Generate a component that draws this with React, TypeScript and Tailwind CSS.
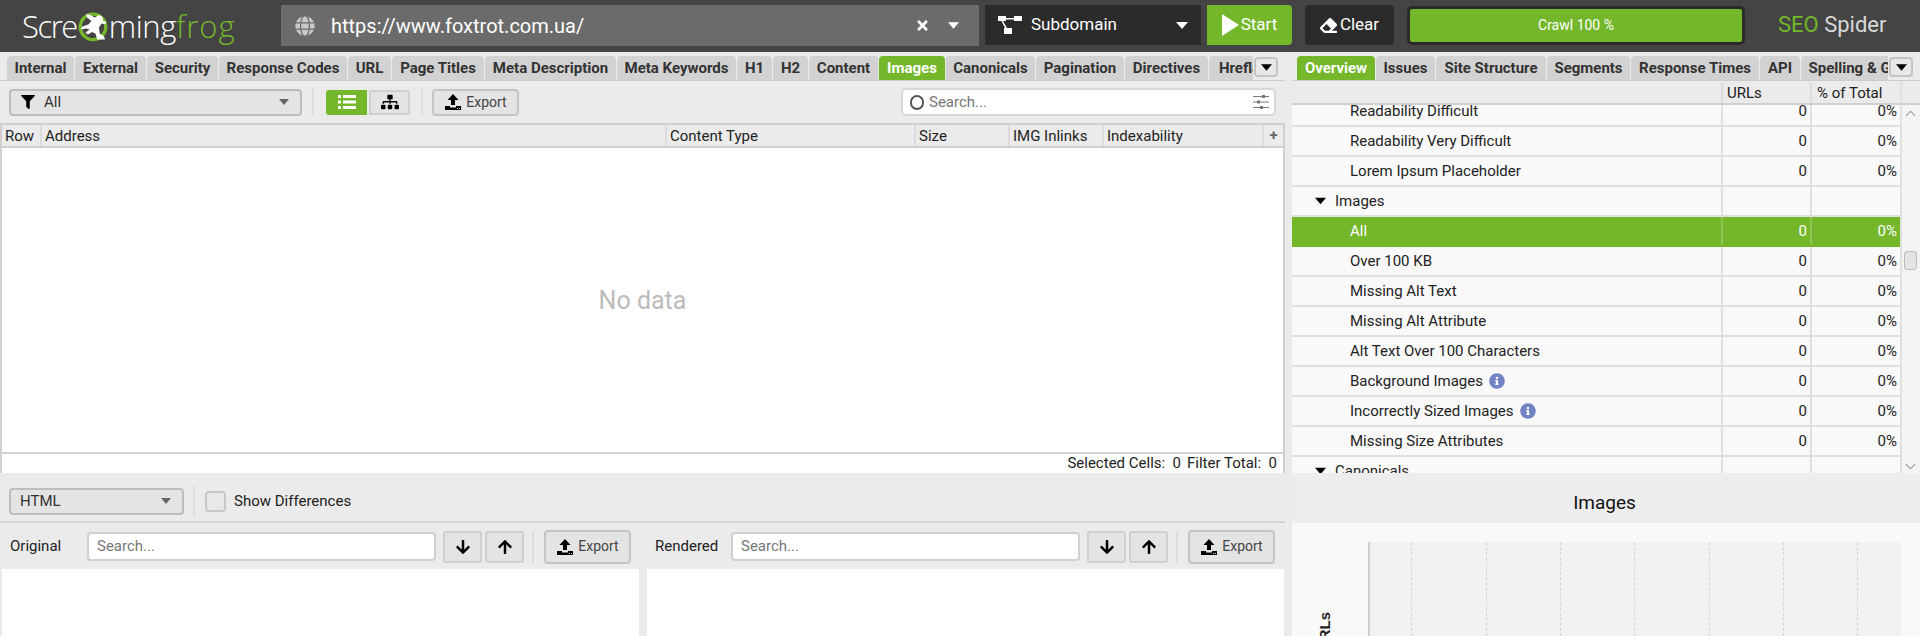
import { FaEraser, FaFilter, FaGlobe, FaInfoCircle, FaSitemap, FaTimes, FaArrowDown, FaArrowUp } from 'react-icons/fa';

const GREEN = 'bg-[#74b72b]';

const leftTabs = [
  { label: 'Internal', w: 'w-[67px]' },
  { label: 'External', w: 'w-[71px]' },
  { label: 'Security', w: 'w-[71px]' },
  { label: 'Response Codes', w: 'w-[128px]' },
  { label: 'URL', w: 'w-[43px]' },
  { label: 'Page Titles', w: 'w-[92px]' },
  { label: 'Meta Description', w: 'w-[131px]' },
  { label: 'Meta Keywords', w: 'w-[119px]' },
  { label: 'H1', w: 'w-[35px]' },
  { label: 'H2', w: 'w-[35px]' },
  { label: 'Content', w: 'w-[69px]' },
  { label: 'Images', w: 'w-[66px]', active: true },
  { label: 'Canonicals', w: 'w-[89px]' },
  { label: 'Pagination', w: 'w-[88px]' },
  { label: 'Directives', w: 'w-[83px]' },
  { label: 'Hreflang', w: 'w-[78px]' },
];

const rightTabs = [
  { label: 'Overview', w: 'w-[78px]', active: true },
  { label: 'Issues', w: 'w-[59px]' },
  { label: 'Site Structure', w: 'w-[110px]' },
  { label: 'Segments', w: 'w-[83px]' },
  { label: 'Response Times', w: 'w-[128px]' },
  { label: 'API', w: 'w-[40px]' },
  { label: 'Spelling & Grammar', w: 'w-[150px]' },
];

const columns = [
  { label: 'Row', w: 'w-[40px]' },
  { label: 'Address', w: 'w-[625px]' },
  { label: 'Content Type', w: 'w-[249px]' },
  { label: 'Size', w: 'w-[94px]' },
  { label: 'IMG Inlinks', w: 'w-[94px]' },
  { label: 'Indexability', w: 'w-[160px]' },
];

const overviewRows = [
  { label: 'Readability Difficult', values: true },
  { label: 'Readability Very Difficult', values: true },
  { label: 'Lorem Ipsum Placeholder', values: true },
  { label: 'Images', group: true },
  { label: 'All', values: true, selected: true },
  { label: 'Over 100 KB', values: true },
  { label: 'Missing Alt Text', values: true },
  { label: 'Missing Alt Attribute', values: true },
  { label: 'Alt Text Over 100 Characters', values: true },
  { label: 'Background Images', values: true, info: true },
  { label: 'Incorrectly Sized Images', values: true, info: true },
  { label: 'Missing Size Attributes', values: true },
  { label: 'Canonicals', group: true },
];

function Caret({ className }: { className: string }) {
  return (
    <svg viewBox="0 0 12 7" className={className} fill="currentColor">
      <path d="M0 0h12L6 7z" />
    </svg>
  );
}

function ExportIcon() {
  return (
    <svg viewBox="0 0 18 18" className="h-[18px] w-[18px] text-black" fill="currentColor">
      <path d="M9 1l5.500 6H11v5H7V7H3.500z" />
      <path d="M1 13h5v1.500h6V13h5v4H1z" />
      <path d="M13 15h1v1h-1zM15 15h1v1h-1z" fill="#ddd" />
    </svg>
  );
}

function ExportButton({ className }: { className: string }) {
  return (
    <button className={`flex items-center justify-center gap-[4px] rounded-[4px] border-2 border-[#c4c4c4] bg-[#e4e4e4] text-[14px] text-[#444] ${className}`}>
      <ExportIcon />
      Export
    </button>
  );
}

function Separator({ className }: { className: string }) {
  return <div className={`w-[2px] bg-[#dcdcdc] ${className}`} />;
}

function Tab({ label, w, active }: { label: string; w: string; active?: boolean }) {
  return (
    <div
      className={`flex h-[24px] shrink-0 items-center justify-center overflow-hidden rounded-t-[4px] pt-[1px] text-[15px] font-bold whitespace-nowrap ${w} ${
        active ? `${GREEN} text-white` : 'bg-[#d2d2d2] text-[#333]'
      }`}
    >
      {label}
    </div>
  );
}

function MoreTabs({ className }: { className: string }) {
  return (
    <button className={`flex h-[20px] w-[24px] shrink-0 items-center justify-center rounded-[4px] border-2 border-[#c4c4c4] bg-[#e8e8e8] ${className}`}>
      <Caret className="h-[7px] w-[11px] text-black" />
    </button>
  );
}

function SearchField({ className }: { className: string }) {
  return (
    <div className={`flex h-[29px] items-center rounded-[4px] border-2 border-[#d0d0d0] bg-white pl-[8px] text-[15px] text-[#777] ${className}`}>
      Search...
    </div>
  );
}

function ArrowButton({ up, className }: { up?: boolean; className: string }) {
  return (
    <button className={`flex h-[32px] w-[39px] items-center justify-center rounded-[3px] border-2 border-[#cfcfcf] bg-[#e4e4e4] text-black ${className}`}>
      {up ? <FaArrowUp className="h-[16px] w-[16px]" /> : <FaArrowDown className="h-[16px] w-[16px]" />}
    </button>
  );
}

function FrogMark() {
  return (
    <svg viewBox="0 0 40 40" className="mx-[-1px] h-[36px] w-[34px] shrink-0">
      <circle cx="20" cy="21" r="15" fill="none" stroke="#74b72b" strokeWidth="4" />
      <path
        d="M12 6l5 1 5 3 5-3 4 2 1 5 4 1-2 3-4-1-3 5 1 7 5 3 1 4h-9l-2-7-4-2-5 3-3-2 5-4-4-1-6 1 1-3 8-3 3-4-5-4z"
        fill="#fff"
      />
    </svg>
  );
}

function Logo() {
  return (
    <div className="ml-[22px] flex h-[42px] w-[239px] shrink-0 items-center font-['Open_Sans',sans-serif] text-[31px] font-light">
      <span className="tracking-[-1.5px] text-white">Scre</span>
      <FrogMark />
      <span className="tracking-[-0.4px] text-white">ming</span>
      <span className="tracking-[1px] text-[#74b72b]">frog</span>
    </div>
  );
}

function Header() {
  return (
    <header className="flex h-[52px] shrink-0 items-start bg-[#444444] pt-[5px]">
      <Logo />
      <div className="ml-[20px] flex h-[41px] w-[698px] items-center bg-[#6b6b6b] pr-[20px] pl-[14px] text-white">
        <FaGlobe className="h-[20px] w-[20px] text-[#c8c8c8]" />
        <span className="ml-[16px] flex-1 text-[20px]">https://www.foxtrot.com.ua/</span>
        <FaTimes className="h-[15px] w-[15px]" />
        <Caret className="ml-[18px] h-[7px] w-[11px]" />
      </div>
      <div className="ml-[6px] flex h-[40px] w-[216px] items-center bg-[#2b2b2b] pr-[13px] pl-[13px] text-white">
        <svg viewBox="0 0 24 20" className="h-[20px] w-[24px]" fill="#fff">
          <path d="M0 1h8v5H0zM16 1h8v5h-8zM6 13h8v6H6z" />
          <path d="M8 3h8v1.500H8zM5 6l4 7-1.500 1L3.500 6z" />
        </svg>
        <span className="ml-[9px] flex-1 text-[17px]">Subdomain</span>
        <Caret className="h-[7px] w-[12px]" />
      </div>
      <button className={`ml-[6px] flex h-[40px] w-[85px] items-center justify-center gap-[2px] rounded-r-[4px] text-[17px] text-white ${GREEN}`}>
        <svg viewBox="0 0 17 22" className="h-[22px] w-[17px]" fill="#fff">
          <path d="M0 0l17 11L0 22z" />
        </svg>
        Start
      </button>
      <button className="ml-[13px] flex h-[40px] w-[89px] items-center justify-center gap-[3px] rounded-[4px] bg-[#2b2b2b] text-[17px] text-white">
        <FaEraser className="h-[17px] w-[17px]" />
        Clear
      </button>
      <div className={`mt-[1px] ml-[13px] flex h-[39px] w-[338px] items-center justify-center rounded-[5px] border-[3px] border-[#2b2b2b] text-[14px] text-white ${GREEN}`}>
        Crawl 100 %
      </div>
      <div className="mt-[5px] ml-[33px] text-[22px] leading-[30px] whitespace-nowrap">
        <span className="text-[#74b72b]">SEO</span> <span className="text-[#d8d8d8]">Spider</span>
      </div>
    </header>
  );
}

function ListIcon() {
  return (
    <svg viewBox="0 0 18 14" className="h-[14px] w-[18px]" fill="#fff">
      <path d="M0 0h3v3H0zM5 0h13v3H5zM0 5.500h3v3H0zM5 5.500h13v3H5zM0 11h3v3H0zM5 11h13v3H5z" />
    </svg>
  );
}

function ImagesToolbar() {
  return (
    <div className="flex h-[42px] shrink-0 items-center pl-[9px]">
      <div className="flex h-[27px] w-[293px] items-center rounded-[4px] border-2 border-[#bdbdbd] bg-[#e4e4e4] pr-[11px] pl-[10px] text-[15px] text-[#333]">
        <FaFilter className="h-[14px] w-[14px] text-black" />
        <span className="ml-[9px] flex-1">All</span>
        <Caret className="h-[6px] w-[10px] text-[#666]" />
      </div>
      <Separator className="ml-[10px] h-[26px]" />
      <div className={`ml-[12px] flex h-[25px] w-[41px] items-center justify-center rounded-l-[3px] ${GREEN}`}>
        <ListIcon />
      </div>
      <div className="ml-[2px] flex h-[25px] w-[41px] items-center justify-center rounded-r-[3px] border-2 border-[#cfcfcf] bg-[#e4e4e4]">
        <FaSitemap className="h-[16px] w-[18px] text-black" />
      </div>
      <Separator className="ml-[11px] h-[26px]" />
      <ExportButton className="ml-[9px] h-[27px] w-[87px]" />
      <div className="ml-[382px] flex h-[28px] w-[375px] items-center rounded-[5px] border-2 border-[#d8d8d8] bg-white pr-[5px] pl-[7px] text-[15px] text-[#777]">
        <span className="h-[15px] w-[14px] rounded-full border-2 border-[#555]" />
        <span className="ml-[5px] flex-1">Search...</span>
        <svg viewBox="0 0 16 16" className="h-[16px] w-[16px]" fill="#777">
          <path d="M0 2h16v1H0zM0 7.500h16v1H0zM0 13h16v1H0z" />
          <path d="M9 1h3v3H9zM4 6.500h3v3H4zM7 12h3v3H7z" />
        </svg>
      </div>
    </div>
  );
}

function ImagesTable() {
  return (
    <div className="flex h-[350px] shrink-0 flex-col border-x-2 border-t-2 border-[#d0d0d0] bg-white">
      <div className="flex h-[23px] shrink-0 border-b-2 border-[#d0d0d0] bg-[#ebebeb] text-[15px] text-[#222]">
        {columns.map((c) => (
          <div key={c.label} className={`flex shrink-0 items-center border-r-2 border-[#dcdcdc] pt-[2px] pl-[3px] ${c.w}`}>
            {c.label}
          </div>
        ))}
        <div className="flex flex-1 items-center justify-center text-[15px] leading-none font-bold text-[#666]">+</div>
      </div>
      <div className="flex flex-1 items-center justify-center border-b-2 border-[#d0d0d0] pt-[2px] text-[25px] text-[#bbb]">No data</div>
      <div className="flex h-[19px] shrink-0 items-center justify-end gap-[6px] pr-[6px] text-[15px] whitespace-pre text-[#222]">
        <span>Selected Cells:  0</span>
        <span>Filter Total:  0</span>
      </div>
    </div>
  );
}

function ViewerPane({ label, labelClass, searchClass, sepClass }: { label: string; labelClass: string; searchClass: string; sepClass: string }) {
  return (
    <>
      <span className={`text-[15px] text-[#222] ${labelClass}`}>{label}</span>
      <SearchField className={searchClass} />
      <ArrowButton className="ml-[7px]" />
      <ArrowButton up className="ml-[3px]" />
      <Separator className={`h-[32px] ${sepClass}`} />
      <ExportButton className="ml-[10px] h-[34px] w-[87px]" />
    </>
  );
}

function SourceViewer() {
  return (
    <div className="flex flex-1 flex-col">
      <div className="flex h-[50px] shrink-0 items-center border-b-2 border-[#d4d4d4] pt-[8px] pl-[9px]">
        <div className="flex h-[27px] w-[175px] items-center rounded-[4px] border-2 border-[#bdbdbd] bg-[#e4e4e4] pr-[11px] pl-[9px] text-[15px] text-[#333]">
          <span className="flex-1">HTML</span>
          <Caret className="h-[6px] w-[10px] text-[#666]" />
        </div>
        <Separator className="ml-[9px] h-[30px]" />
        <div className="ml-[10px] h-[21px] w-[21px] rounded-[4px] border-2 border-[#c8c8c8] bg-[#e8e8e8]" />
        <span className="ml-[8px] text-[15px] text-[#222]">Show Differences</span>
      </div>
      <div className="flex h-[46px] shrink-0 items-center pt-[1px]">
        <ViewerPane label="Original" labelClass="ml-[10px] w-[77px]" searchClass="w-[349px]" sepClass="ml-[8px]" />
        <div className="ml-[24px] flex items-center">
          <ViewerPane label="Rendered" labelClass="w-[76px]" searchClass="w-[349px]" sepClass="ml-[8px]" />
        </div>
      </div>
      <div className="flex flex-1 gap-[8px] pr-[1px] pl-[2px]">
        <div className="w-[637px] bg-white" />
        <div className="flex-1 bg-white" />
      </div>
    </div>
  );
}

function OverviewTable() {
  return (
    <div className="flex h-[392px] shrink-0">
      <div className="flex w-[608px] shrink-0 flex-col">
        <div className="flex h-[24px] shrink-0 border-b-2 border-[#d0d0d0] pt-[2px] text-[15px] text-[#222]">
          <div className="w-[431px] border-r-2 border-[#dcdcdc]" />
          <div className="flex w-[89px] items-center border-r-2 border-[#dcdcdc] pl-[4px]">URLs</div>
          <div className="flex flex-1 items-center pl-[5px]">% of Total</div>
        </div>
        <div className="flex-1 overflow-hidden bg-[#f9f9f9]">
          <div className="mt-[-8px]">
            {overviewRows.map((r) => (
              <div
                key={r.label}
                className={`flex h-[30px] border-b-2 text-[15px] ${r.selected ? `${GREEN} border-[#74b72b] text-white` : 'border-[#e0e0e0] text-[#222]'}`}
              >
                <div className={`flex w-[431px] items-center border-r-2 ${r.selected ? 'border-[#8ec653]' : 'border-[#e0e0e0]'} ${r.group ? 'pl-[23px]' : 'pl-[58px]'}`}>
                  {r.group && <Caret className="mr-[9px] h-[8px] w-[11px] text-black" />}
                  {r.label}
                  {r.info && <FaInfoCircle className="ml-[6px] h-[16px] w-[16px] text-[#7283c4]" />}
                </div>
                <div className={`flex w-[89px] items-center justify-end border-r-2 pr-[3px] ${r.selected ? 'border-[#8ec653]' : 'border-[#e0e0e0]'}`}>{r.values && '0'}</div>
                <div className="flex flex-1 items-center justify-end pr-[3px]">{r.values && '0%'}</div>
              </div>
            ))}
          </div>
        </div>
      </div>
      <div className="flex flex-1 flex-col border-l-2 border-[#e0e0e0] bg-[#f4f4f4]">
        <div className="h-[24px] shrink-0 border-b-2 border-[#d0d0d0] bg-[#ebebeb]" />
        <div className="relative flex-1">
          <svg viewBox="0 0 12 7" className="absolute top-[5px] left-[3px] h-[7px] w-[11px]" fill="none" stroke="#999" strokeWidth="1.200">
            <path d="M1 6l5-5 5 5" />
          </svg>
          <div className="absolute top-[146px] left-[2px] h-[19px] w-[13px] rounded-[3px] border border-[#bbb] bg-[#e4e4e4]" />
          <svg viewBox="0 0 12 7" className="absolute top-[358px] left-[3px] h-[7px] w-[11px]" fill="none" stroke="#999" strokeWidth="1.200">
            <path d="M1 1l5 5 5-5" />
          </svg>
        </div>
      </div>
    </div>
  );
}

function ImagesChart() {
  const grid = ['w-[42px]', 'w-[75px]', 'w-[74px]', 'w-[74px]', 'w-[75px]', 'w-[74px]', 'w-[74px]'];
  return (
    <div className="flex flex-1 flex-col bg-[#ededed]">
      <div className="flex h-[50px] shrink-0 items-center justify-center pt-[11px] pr-[3px] text-[19px] text-[#111]">Images</div>
      <div className="relative flex-1 overflow-hidden bg-[#f9f9f9] pt-[19px] pr-[19px] pl-[76px]">
        <div className="flex h-full border-l-2 border-[#cfcfcf] bg-[#f2f2f2]">
          {grid.map((w, i) => (
            <div key={i} className={`h-full shrink-0 border-r border-dashed border-[#d4d4d4] ${w}`} />
          ))}
        </div>
        <span className="absolute top-[89px] left-[22px] [writing-mode:vertical-rl] rotate-180 font-['Liberation_Sans',sans-serif] text-[15px] font-bold whitespace-nowrap text-[#222]">
          URLs
        </span>
      </div>
    </div>
  );
}

export default function App() {
  return (
    <div className="flex h-[636px] w-[1920px] flex-col overflow-hidden bg-[#ebebeb] font-['Roboto',sans-serif]">
      <Header />
      <div className="flex min-h-0 flex-1">
        <div className="flex w-[1285px] shrink-0 flex-col">
          <div className="flex h-[29px] shrink-0 items-end border-b border-[#cccccc] pl-[7px]">
            <div className="flex h-[24px] w-[1246px] gap-[1px] overflow-hidden">
              {leftTabs.map((t) => (
                <Tab key={t.label} {...t} />
              ))}
            </div>
            <MoreTabs className="mb-[3px] ml-[1px]" />
          </div>
          <ImagesToolbar />
          <ImagesTable />
          <SourceViewer />
        </div>
        <div className="ml-[7px] flex min-w-0 flex-1 flex-col">
          <div className="flex h-[29px] shrink-0 items-end border-b border-[#cccccc] pl-[5px]">
            <div className="flex h-[24px] w-[591px] gap-[1px] overflow-hidden">
              {rightTabs.map((t) => (
                <Tab key={t.label} {...t} />
              ))}
            </div>
            <MoreTabs className="mb-[3px] ml-[1px]" />
          </div>
          <OverviewTable />
          <ImagesChart />
        </div>
      </div>
    </div>
  );
}
